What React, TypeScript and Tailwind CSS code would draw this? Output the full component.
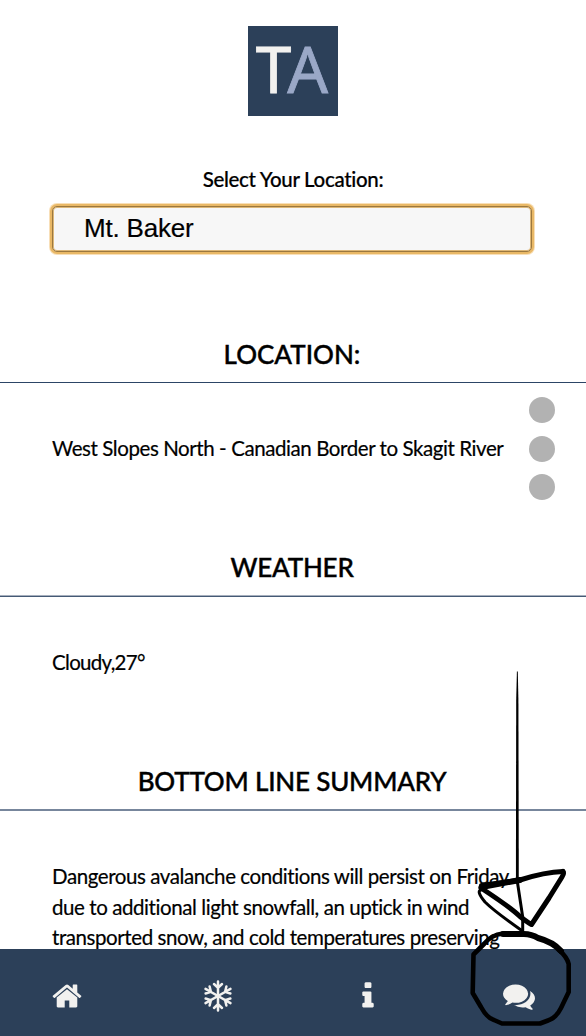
import type { ReactNode } from "react";

const HOME =
  "M1472 992v480q0 26-19 45t-45 19h-384v-384h-256v384h-384q-26 0-45-19t-19-45v-480q0-1 .5-3t.5-3l575-474 575 474q1 2 1 6zm223-69l-62 74q-8 9-21 11h-3q-13 0-21-7l-692-577-692 577q-12 8-24 7-13-2-21-11l-62-74q-8-10-7-23.5t11-21.5l719-599q32-26 76-26t76 26l244 204v-195q0-14 9-23t23-9h192q14 0 23 9t9 23v408l219 182q10 8 11 21.5t-7 23.5z";
const INFO =
  "M1216 1344v128q0 26-19 45t-45 19h-512q-26 0-45-19t-19-45v-128q0-26 19-45t45-19h64v-384h-64q-26 0-45-19t-19-45v-128q0-26 19-45t45-19h384q26 0 45 19t19 45v576h64q26 0 45 19t19 45zm-128-1152v192q0 26-19 45t-45 19h-256q-26 0-45-19t-19-45v-192q0-26 19-45t45-19h256q26 0 45 19t19 45z";
const COMMENTS =
  "M1408 768q0 139-94 257t-256.5 186.5-353.5 68.5q-86 0-176-16-124 88-278 128-36 9-86 16h-3q-11 0-20.5-8t-11.5-21q-1-3-1-6.5t.5-6.5 2-6l2.5-5 3.5-5.5 4-5 4.5-5 4-4.5q5-6 23-25t26-29.5 22.5-29 25-38.5 20.5-44q-124-72-195-177t-71-224q0-139 94-257t256.5-186.5 353.5-68.5 353.5 68.5 256.5 186.5 94 257zm384 256q0 120-71 224.5t-195 176.5q10 24 20.5 44t25 38.5 22.5 29 26 29.5 23 25q1 1 4 4.5t4.5 5 4 5 3.5 5.5l2.5 5 2 6 .5 6.5-1 6.5q-3 14-13 22t-22 7q-50-7-86-16-154-40-278-128-90 16-176 16-271 0-472-132 58 4 88 4 161 0 309-45t264-129q125-92 192-212t67-254q0-77-23-152 129 71 204 178t75 230z";

function Glyph({ d }: { d: string }) {
  return (
    <svg viewBox="0 0 1792 1792" className="size-8 fill-[#f2f1ef]">
      <path d={d} />
    </svg>
  );
}

function Snowflake() {
  return (
    <svg viewBox="-16 -16 32 32" className="size-8 fill-none stroke-[#f2f1ef] stroke-[2.5px]" strokeLinecap="round" strokeLinejoin="round">
      {[0, 60, 120, 180, 240, 300].map((a) => (
        <path key={a} transform={`rotate(${a})`} d="M0 0V-14.4M-4 -12L0 -8.2L4 -12" />
      ))}
    </svg>
  );
}

function Section({ title, titleClass, children }: { title: string; titleClass: string; children: ReactNode }) {
  return (
    <section className="h-[214px] shrink-0">
      <h2 className={`flex h-[57px] items-center justify-center pr-[2px] text-[26px] font-medium whitespace-nowrap [-webkit-text-stroke:0.4px_black] ${titleClass}`}>
        {title}
      </h2>
      <div className="px-[52px] pt-[50.4px] text-[20.5px] leading-[30.5px] tracking-[-0.42px] whitespace-nowrap [-webkit-text-stroke:0.2px_black]">{children}</div>
    </section>
  );
}

function Scribble() {
  return (
    <svg viewBox="0 0 110 360" className="pointer-events-none absolute top-[670px] left-[468px] h-[360px] w-[110px] fill-none stroke-black" strokeLinecap="round" strokeLinejoin="round">
      <g transform="translate(-468 -670)">
        <path d="M516.9 671.5H517.8L518.4 700L518.8 884H515.9L516.2 700Z" fill="black" stroke="none" />
        <path strokeWidth="3" d="M517.4 882L522.7 917V931" />
        <path strokeWidth="6" d="M481.5 887L520 880" />
        <path strokeWidth="5" d="M481.5 885.5L520 880Q545 872 563 871.5" />
        <path strokeWidth="5" d="M563 871.5Q564.5 873 562 877L549 898L531.5 924.5Q527 922 520 916.5Q510 907 481 888" />
        <path strokeWidth="3" d="M481 890Q476 891 485 902Q494 911 521 930" />
        <path strokeWidth="6" d="M503 934H522Q531 933.5 538 938Q553 942 561 951" />
        <path strokeWidth="4.6" d="M503 933.5Q491 935 484 944L473.5 954.5L472.7 993L481 1007Q487 1018 494 1020L502 1023.5H540L548 1020.5Q556 1018 561 1008L568.7 992V964Q567 957 559 950" />
      </g>
    </svg>
  );
}

export default function App() {
  return (
    <div className="relative flex h-[1036px] w-[586px] flex-col overflow-hidden bg-white font-['Lato',sans-serif] text-black">
      <header className="flex h-[326px] shrink-0 flex-col items-center pt-[26px]">
        <div className="flex h-[90px] w-[90px] items-center justify-center bg-[#2c4059] pr-[2px] pb-[4px] font-['Noto_Sans',sans-serif] text-[64px] leading-none">
          <span className="tracking-[-4px] text-[#f2f1ef] [-webkit-text-stroke:0.8px_#f2f1ef]">T</span>
          <span className="text-[#9aa8c7] [-webkit-text-stroke:0.8px_#9aa8c7]">A</span>
        </div>
        <label className="mt-[48px] text-[20.5px] leading-[30px] font-medium tracking-[-0.33px] whitespace-nowrap [-webkit-text-stroke:0.2px_black]">Select Your Location:</label>
        <div className="mt-[12px] mr-[2px] flex h-[46px] w-[480px] items-center rounded-[5px] border border-[#9b783f] bg-[#f7f7f7] pb-[2px] pl-[31px] font-['Liberation_Sans',sans-serif] text-[26px] tracking-[-0.2px] shadow-[0_0_0_2px_#e9b866,0_0_0_3px_#f8dfb8,inset_0_0_0_1px_#ddb778] [-webkit-text-stroke:0.2px_black]">
          Mt. Baker
        </div>
      </header>
      <main className="flex min-h-0 flex-1 flex-col overflow-hidden">
        <Section title="LOCATION:" titleClass="border-b border-[#2c4566]">
          <p>West Slopes North - Canadian Border to Skagit River</p>
        </Section>
        <Section title="WEATHER" titleClass="border-b border-[#455a75] pb-[2px] tracking-[-0.2px] shadow-[inset_0_-1px_0_#a6afbd]">
          <p className="tracking-[-0.7px]">Cloudy,27°</p>
        </Section>
        <Section title="BOTTOM LINE SUMMARY" titleClass="border-b-2 border-[#77869c] tracking-[-0.2px]">
          <p>Dangerous avalanche conditions will persist on Friday</p>
          <p>due to additional light snowfall, an uptick in wind</p>
          <p>transported snow, and cold temperatures preserving</p>
        </Section>
      </main>
      <nav className="flex h-[87px] shrink-0 items-center justify-between bg-[#2c4059] pt-[7px] pr-[51.5px] pl-[51px]">
        <Glyph d={HOME} />
        <Snowflake />
        <Glyph d={INFO} />
        <Glyph d={COMMENTS} />
      </nav>
      <div className="absolute top-[397px] left-[529.3px] flex flex-col gap-[12.5px]">
        <span className="size-[26px] rounded-full bg-[#b2b2b2]" />
        <span className="size-[26px] rounded-full bg-[#b2b2b2]" />
        <span className="size-[26px] rounded-full bg-[#b2b2b2]" />
      </div>
      <Scribble />
    </div>
  );
}
